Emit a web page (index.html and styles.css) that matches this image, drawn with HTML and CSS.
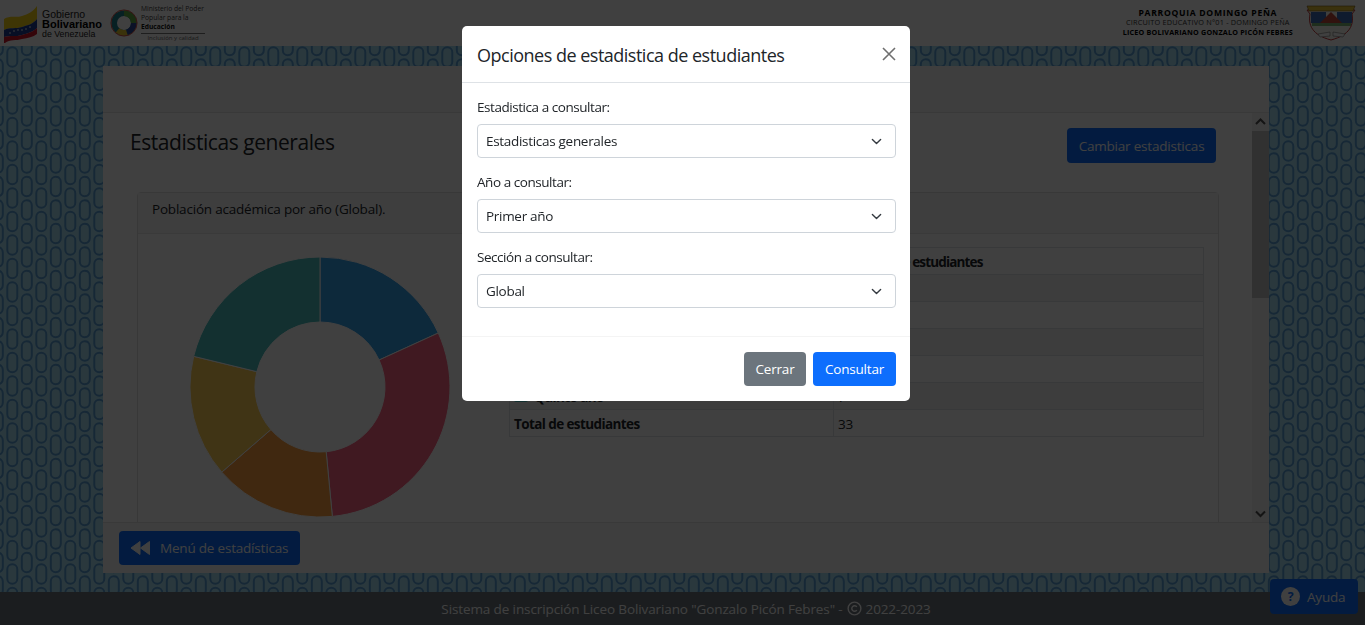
FILE: index.html
```html
<!DOCTYPE html>
<html lang="es">
<head>
<meta charset="utf-8">
<title>Estadísticas</title>
<link rel="stylesheet" href="styles.css">
</head>
<body>
<div class="page">
  <header class="topbar">
    <div class="brand">
      <svg class="flag" viewBox="0 0 34 37" width="34" height="37">
        <path d="M0 13C6 9 12 12 18 10C24 8 29 6 33 0V13C29 18 24 19 18 21C12 23 6 21 0 24Z" fill="#f7d117"/>
        <path d="M0 24C6 21 12 23 18 21C24 19 29 18 33 13V22C29 26 24 27 18 29C12 31 6 29 0 31Z" fill="#1c3f94"/>
        <path d="M0 31C6 29 12 31 18 29C24 27 29 26 33 22V28C29 31 24 32 18 33C12 35 6 33 1 37H0Z" fill="#cf142b"/>
        <g fill="#fff"><circle cx="6" cy="27" r=".8"/><circle cx="10" cy="25" r=".8"/><circle cx="14" cy="24" r=".8"/><circle cx="18" cy="24" r=".8"/><circle cx="22" cy="23" r=".8"/><circle cx="26" cy="21" r=".8"/></g>
      </svg>
      <div class="gov"><span class="gov-top">Gobierno</span><strong>Bolivariano</strong><span class="gov-end">de Venezuela</span></div>
      <svg class="ring" viewBox="0 0 30 30" width="28" height="28" fill="none">
        <circle cx="15" cy="15" r="10.5" stroke="#1d7f8c" stroke-width="6"/>
        <path d="M15 4.500A10.500 10.500 0 0 1 25.500 15" stroke="#62b146" stroke-width="6"/>
        <path d="M25.500 15A10.500 10.500 0 0 1 18 25" stroke="#2c4a9a" stroke-width="6"/>
        <path d="M18 25A10.500 10.500 0 0 1 8 23" stroke="#e8c72c" stroke-width="6"/>
        <circle cx="15" cy="15" r="14" stroke="#d4453b" stroke-width="1"/>
      </svg>
      <div class="ministry">
        <span>Ministerio del Poder</span>
        <span>Popular para la</span>
        <strong>Educación</strong>
        <em>Inclusión y calidad</em>
      </div>
    </div>
    <div class="school">
      <div class="school-text">
        <strong class="parish">PARROQUIA DOMINGO PEÑA</strong>
        <span>CIRCUITO EDUCATIVO N°01 - DOMINGO PEÑA</span>
        <strong>LICEO BOLIVARIANO GONZALO PICÓN FEBRES</strong>
      </div>
      <svg class="shield" viewBox="0 0 50 36" width="50" height="36">
        <path d="M1 5H49L46 9C48 20 44 30 25 35C6 30 2 20 4 9Z" fill="#fbf9f1" stroke="#c4373a"/>
        <path d="M1 1H49L47 6H3Z" fill="#e6c23a" stroke="#7a5a12" stroke-width=".6"/>
        <path d="M5 7H20V18H5Z" fill="#3d6cb8"/>
        <path d="M31 7H46V18H31Z" fill="#3d6cb8"/>
        <path d="M14 18L25 7L36 18Z" fill="#c4473a"/>
        <path d="M6 18H45V21H6Z" fill="#7bb878"/>
        <path d="M12 29L24 27V31L14 32ZM27 27L39 29L37 32L27 31Z" fill="#fff" stroke="#777" stroke-width=".6"/>
      </svg>
    </div>
  </header>

  <main class="main">
    <section class="panel">
      <div class="panel-top"></div>
      <div class="panel-mid">
        <div class="scroll">
          <div class="title-row">
            <h2 class="title">Estadisticas generales</h2>
            <button class="btn btn-primary">Cambiar estadisticas</button>
          </div>
          <div class="card">
            <div class="card-head">Población académica por año (Global).</div>
            <div class="card-body">
              <svg class="donut" viewBox="0 0 260 260" width="260" height="260">
                <g stroke="#fff" stroke-width="1">
                  <path fill="#36a2eb" d="M130 0A130 130 0 0 1 248.250 76L189.120 103A65 65 0 0 0 130 65Z"/>
                  <path fill="#ff6384" d="M248.250 76A130 130 0 0 1 142.360 259.410L136.180 194.710A65 65 0 0 0 189.120 103Z"/>
                  <path fill="#ff9f40" d="M142.360 259.410A130 130 0 0 1 31.760 215.140L80.880 172.570A65 65 0 0 0 136.180 194.710Z"/>
                  <path fill="#ffcd56" d="M31.760 215.140A130 130 0 0 1 3.670 99.340L66.830 114.670A65 65 0 0 0 80.880 172.570Z"/>
                  <path fill="#4bc0c0" d="M3.670 99.340A130 130 0 0 1 130 0V65A65 65 0 0 0 66.830 114.670Z"/>
                </g>
              </svg>
              <table class="stats">
                <thead>
                  <tr><th>Año</th><th>Cantidad de estudiantes</th></tr>
                </thead>
                <tbody>
                  <tr><th><i class="dot dot-blue"></i>Primer año</th><td>6</td></tr>
                  <tr><th><i class="dot dot-red"></i>Segundo año</th><td>10</td></tr>
                  <tr><th><i class="dot dot-orange"></i>Tercer año</th><td>5</td></tr>
                  <tr><th><i class="dot dot-yellow"></i>Cuarto año</th><td>5</td></tr>
                  <tr><th><i class="dot dot-teal"></i>Quinto año</th><td>7</td></tr>
                  <tr><th>Total de estudiantes</th><td>33</td></tr>
                </tbody>
              </table>
            </div>
          </div>
        </div>
        <div class="scrollbar">
          <svg class="arrow" viewBox="0 0 17 17" width="17" height="17"><path d="M4 11L8.500 6.500L13 11" fill="none" stroke="#505050" stroke-width="2"/></svg>
          <div class="thumb-zone"><div class="thumb"></div></div>
          <svg class="arrow" viewBox="0 0 17 17" width="17" height="17"><path d="M4 6.500L8.500 11L13 6.500" fill="none" stroke="#505050" stroke-width="2"/></svg>
        </div>
      </div>
      <div class="panel-bottom">
        <button class="btn btn-primary btn-menu">
          <svg viewBox="0 0 20 16" width="20" height="16"><path d="M10 1.500V14.500L1 8ZM19.500 1.500V14.500L10.500 8Z" fill="#fff" stroke="#fff" stroke-linejoin="round"/></svg>
          <span>Menú de estadísticas</span>
        </button>
      </div>
    </section>
  </main>

  <footer class="footer">
    <span>Sistema de inscripción Liceo Bolivariano "Gonzalo Picón Febres" -</span>
    <svg viewBox="0 0 16 16" width="15" height="15" fill="none" stroke="#fff" stroke-width="1.500"><circle cx="8" cy="8" r="6.800"/><path d="M10.500 6.200A3 3 0 1 0 10.500 9.800"/></svg>
    <span>2022-2023</span>
  </footer>
</div>

<button class="btn btn-primary help">
  <svg viewBox="0 0 20 20" width="19" height="19"><circle cx="10" cy="10" r="10" fill="#fff"/><text x="10" y="14.500" class="help-q">?</text></svg>
  <span>Ayuda</span>
</button>

<div class="backdrop"></div>

<div class="modal">
  <div class="modal-head">
    <h3 class="modal-title">Opciones de estadistica de estudiantes</h3>
    <svg class="close" viewBox="0 0 16 16" width="16" height="16"><path d="M2 2L14 14M14 2L2 14" stroke="#6f6f6f" stroke-width="1.600" fill="none"/></svg>
  </div>
  <div class="modal-body">
    <label class="field">
      <span class="field-label">Estadistica a consultar:</span>
      <select class="select"><option>Estadisticas generales</option></select>
    </label>
    <label class="field">
      <span class="field-label">Año a consultar:</span>
      <select class="select"><option>Primer año</option></select>
    </label>
    <label class="field">
      <span class="field-label">Sección a consultar:</span>
      <select class="select"><option>Global</option></select>
    </label>
  </div>
  <div class="modal-foot">
    <button class="btn btn-gray">Cerrar</button>
    <button class="btn btn-blue">Consultar</button>
  </div>
</div>
</body>
</html>
```

FILE: styles.css
```css
* { box-sizing: border-box; }
html, body { height: 100%; margin: 0; }
body {
  font-family: "Open Sans", "Noto Sans", sans-serif;
  font-size: 13.500px;
  letter-spacing: -0.2px;
  color: #212529;
  overflow: hidden;
  background-color: #a9dff4;
  background-image: url("data:image/svg+xml,%3Csvg xmlns='http://www.w3.org/2000/svg' width='29' height='47'%3E%3Cg fill='none' stroke='%235a9fd6' stroke-width='2'%3E%3Crect x='7.300' y='23.800' width='10' height='19.500' rx='5'/%3E%3Crect x='7.300' y='47.300' width='10' height='19.500' rx='5'/%3E%3Crect x='7.300' y='0.300' width='10' height='19.500' rx='5'/%3E%3Crect x='21.800' y='12.200' width='10' height='19.500' rx='5'/%3E%3Crect x='21.800' y='35.700' width='10' height='19.500' rx='5'/%3E%3Crect x='21.800' y='-11.300' width='10' height='19.500' rx='5'/%3E%3Crect x='-7.200' y='12.200' width='10' height='19.500' rx='5'/%3E%3Crect x='-7.200' y='35.700' width='10' height='19.500' rx='5'/%3E%3Crect x='-7.200' y='-11.300' width='10' height='19.500' rx='5'/%3E%3C/g%3E%3C/svg%3E");
}
.page { height: 100%; display: flex; flex-direction: column; }

/* top bar */
.topbar {
  height: 46px;
  flex: none;
  background: #fff;
  display: flex;
  justify-content: space-between;
  align-items: center;
  padding: 0 9px 0 4px;
}
.brand { display: flex; align-items: center; }
.flag { margin: 2px 4px 0 0; }
.gov {
  display: flex;
  flex-direction: column;
  font-family: "Liberation Sans", sans-serif;
  line-height: 10px;
  letter-spacing: 0;
  color: #222;
  width: 68px;
  margin-top: 2px;
}
.gov-top { font-size: 10.500px; }
.gov-end { font-size: 8.800px; }
.gov strong { font-size: 11px; color: #000; }
.ministry {
  display: flex;
  flex-direction: column;
  font-family: "Open Sans", sans-serif;
  font-size: 6.700px;
  line-height: 9px;
  letter-spacing: 0;
  width: 64px;
  color: #444;
  margin-left: 3px;
}
.ministry strong { color: #111; }
.ministry em {
  font-style: normal;
  font-size: 6px;
  line-height: 8px;
  margin-top: 2px;
  border-top: 1px solid #777;
  text-align: center;
  color: #666;
}
.school { display: flex; align-items: center; gap: 13px; }
.school-text {
  display: flex;
  flex-direction: column;
  align-items: center;
  font-family: "Open Sans", sans-serif;
  font-size: 7.300px;
  line-height: 9.500px;
  letter-spacing: 0.2px;
  color: #333;
}
.school-text strong { color: #000; font-size: 7.200px; }
.school-text .parish { font-size: 8.600px; letter-spacing: .7px; }

/* main */
.main { flex: 1; min-height: 0; padding: 20px 96px 19px 103px; }
.panel {
  height: 100%;
  background: #fff;
  display: flex;
  flex-direction: column;
}
.panel-top {
  height: 47px;
  flex: none;
  background: #f7f7f7;
  border-bottom: 1px solid #e4e4e4;
}
.panel-mid { flex: 1; min-height: 0; display: flex; }
.scroll { flex: 1; min-width: 0; overflow: hidden; }
.title-row {
  display: flex;
  justify-content: space-between;
  align-items: flex-start;
  padding: 15px 36px 0 27px;
  height: 79px;
}
.title {
  margin: 0;
  font-size: 21px;
  font-weight: 400;
  line-height: 29px;
  letter-spacing: -0.44px;
}
.card {
  margin: 0 33px 0 34px;
  border: 1px solid #dfdfdf;
  border-radius: 4px 4px 0 0;
}
.card-head {
  height: 41px;
  padding: 7px 14px;
  line-height: 18px;
  background: #f7f7f7;
  border-bottom: 1px solid #e8e8e8;
}
.card-body {
  display: flex;
  align-items: flex-start;
  padding: 13px 14px 30px 52px;
}
.donut { margin-top: 10px; margin-right: 59px; flex: none; }
.stats {
  flex: 1;
  border-collapse: collapse;
}
.stats th, .stats td {
  height: 27px;
  padding: 2px 4px 0;
  border: 1px solid #dee2e6;
  text-align: left;
  font-weight: 400;
}
.stats th { font-weight: 700; width: 324px; letter-spacing: -0.6px; }
.stats thead th:last-child { width: auto; font-weight: 700; letter-spacing: -0.85px; }
.stats tbody tr:nth-child(odd) { background: #f2f2f2; }
.stats tbody tr:last-child { background: #fff; }
.dot { display: inline-block; width: 14px; height: 10px; margin-right: 6px; border-radius: 2px; }
.dot-blue { background: #36a2eb; }
.dot-red { background: #ff6384; }
.dot-orange { background: #ff9f40; }
.dot-yellow { background: #ffcd56; }
.dot-teal { background: #4bc0c0; }

/* scrollbar */
.scrollbar {
  width: 17px;
  flex: none;
  display: flex;
  flex-direction: column;
  background: #f1f1f1;
}
.arrow { flex: none; }
.thumb-zone { flex: 1; }
.thumb { height: 167px; margin-top: 1px; background: #c1c1c1; }

.panel-bottom {
  height: 51px;
  flex: none;
  border-top: 1px solid #e4e4e4;
  background: #f7f7f7;
  padding: 8px 16px;
}

/* buttons */
.btn {
  font: inherit;
  letter-spacing: inherit;
  border: 0;
  border-radius: 4px;
  height: 34px;
  color: #fff;
  padding: 0 12px;
}
.btn-primary { background: #0d6efd; }
.title-row .btn { height: 35px; width: 149px; padding: 0; }
.btn-menu {
  width: 181px;
  height: 34px;
  display: flex;
  align-items: center;
  gap: 10px;
  padding: 0 0 0 11px;
}
.btn-gray { background: #6c757d; width: 62px; padding: 0; }
.btn-blue { background: #0d6efd; width: 83px; padding: 0; }

/* footer */
.footer {
  height: 33px;
  flex: none;
  background: #6c757d;
  color: #fff;
  display: flex;
  justify-content: center;
  align-items: center;
  gap: 4px;
  letter-spacing: -0.11px;
  padding-left: 7px;
}
.help {
  position: fixed;
  left: 1270px;
  top: 579px;
  width: 88px;
  height: 35px;
  display: flex;
  align-items: center;
  gap: 7px;
  padding: 0 0 0 11px;
}
.help-q {
  font-family: "Open Sans", sans-serif;
  font-size: 13px;
  font-weight: 700;
  text-anchor: middle;
  fill: #0d6efd;
}

/* modal */
.backdrop {
  position: fixed;
  inset: 0;
  background: rgba(0, 0, 0, .75);
}
.modal {
  position: fixed;
  left: 462px;
  top: 26px;
  width: 448px;
  height: 375px;
  background: #fff;
  border-radius: 5px;
  display: flex;
  flex-direction: column;
}
.modal-head {
  height: 57px;
  flex: none;
  display: flex;
  justify-content: space-between;
  align-items: center;
  padding: 2px 13px 0 15px;
  border-bottom: 1px solid #dee2e6;
}
.modal-title {
  margin: 0;
  font-size: 18px;
  font-weight: 400;
  letter-spacing: -0.5px;
  line-height: 26px;
}
.close { margin-top: -2px; }
.modal-body {
  flex: 1;
  padding: 15px 14px 0 15px;
  display: flex;
  flex-direction: column;
  gap: 15px;
}
.field { display: flex; flex-direction: column; gap: 7px; line-height: 19px; }
.field-label { letter-spacing: -0.45px; }
.select {
  appearance: none;
  width: 100%;
  height: 34px;
  padding: 0 8px;
  font: inherit;
  letter-spacing: -0.3px;
  color: #212529;
  border: 1px solid #ced4da;
  border-radius: 4px;
  background: #fff url("data:image/svg+xml,%3Csvg xmlns='http://www.w3.org/2000/svg' viewBox='0 0 16 16'%3E%3Cpath fill='none' stroke='%23343a40' stroke-linecap='round' stroke-linejoin='round' stroke-width='2' d='M2 5l6 6 6-6'/%3E%3C/svg%3E") no-repeat right 13px center / 11px 11px;
}
.modal-foot {
  height: 65px;
  flex: none;
  display: flex;
  justify-content: flex-end;
  align-items: flex-start;
  gap: 7px;
  padding: 15px 14px 0 0;
  border-top: 1px solid #f4f4f4;
}
```
